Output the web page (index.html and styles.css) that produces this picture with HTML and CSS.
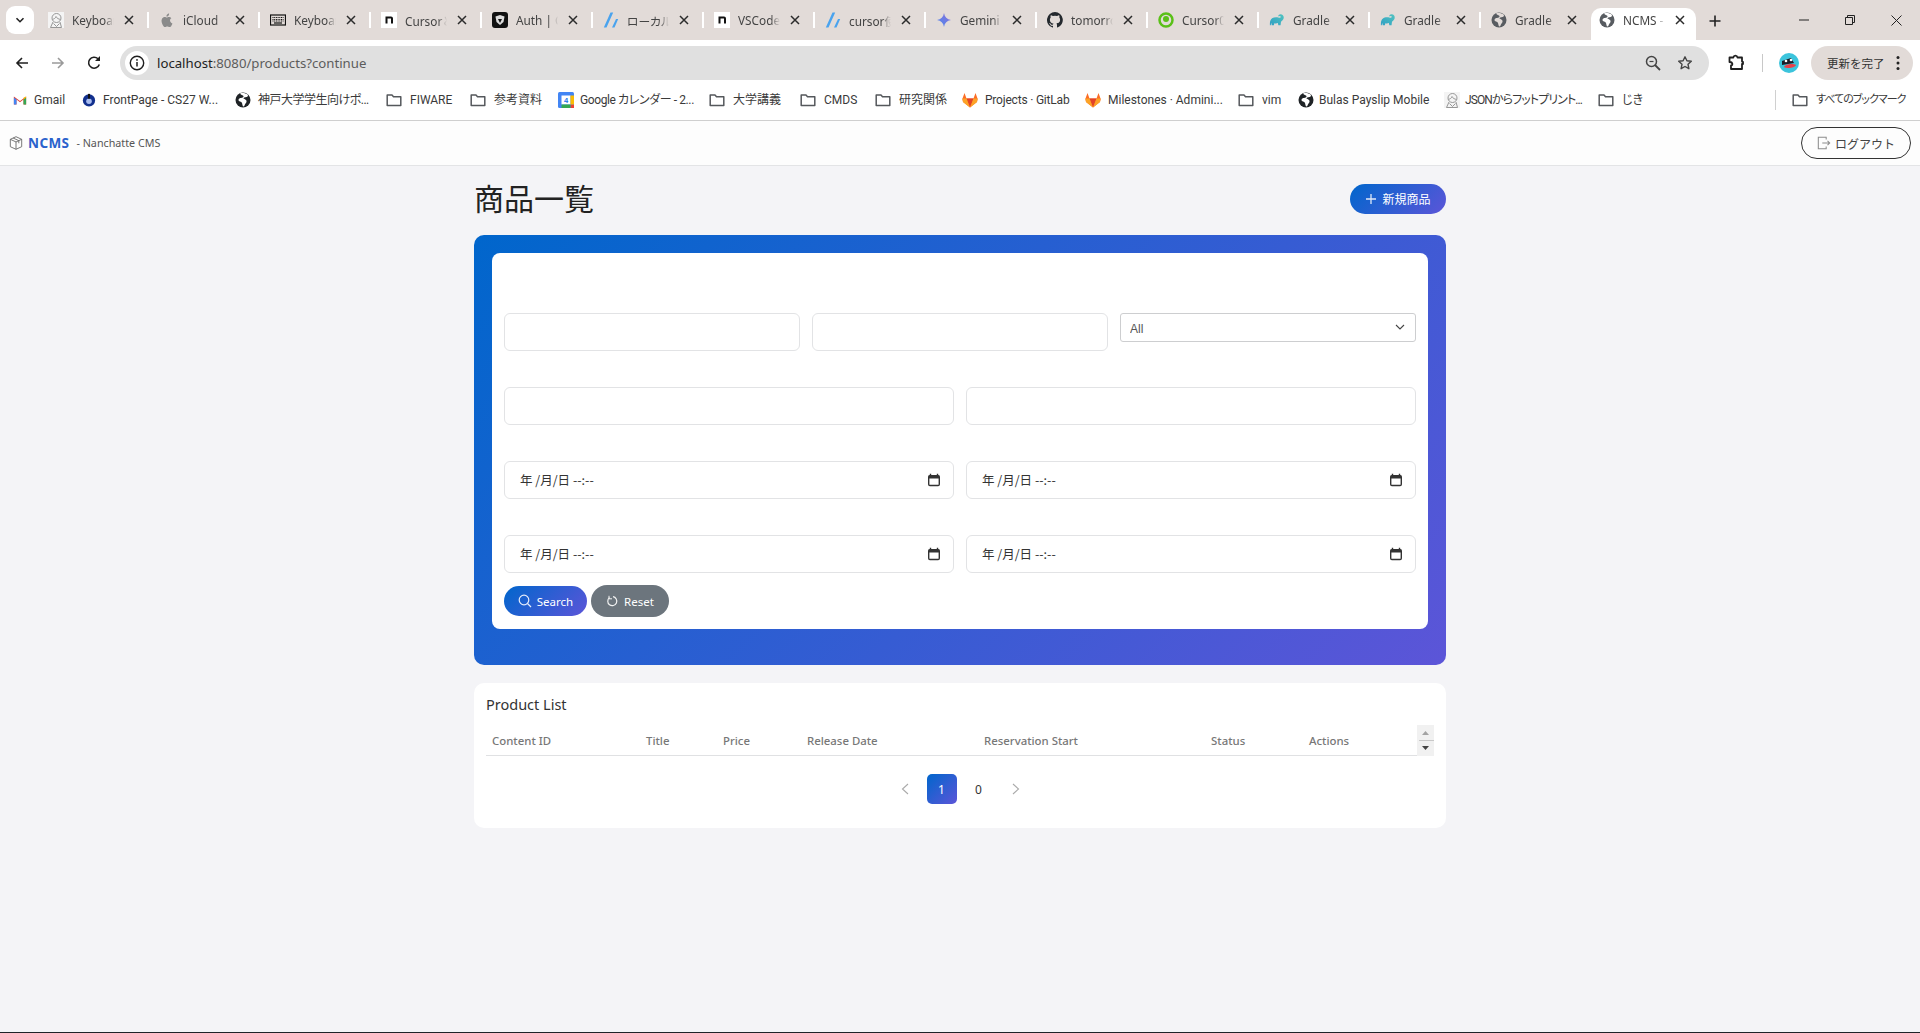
FILE: index.html
```html
<!DOCTYPE html>
<html lang="ja">
<head>
<meta charset="utf-8">
<title>NCMS - Nanchatte CMS</title>
<link rel="stylesheet" href="styles.css">
</head>
<body>
<svg class="defs" width="0" height="0" aria-hidden="true">
  <defs>
    <linearGradient id="gem" x1="0" y1="1" x2="1" y2="0"><stop offset="0" stop-color="#4b8af0"/><stop offset="1" stop-color="#8a6fd8"/></linearGradient>
    <linearGradient id="grad" x1="0" y1="1" x2="1" y2="0"><stop offset="0" stop-color="#2f9fc4"/><stop offset="1" stop-color="#52c4c0"/></linearGradient>
  </defs>
  <symbol id="i-x" viewBox="0 0 10 10"><path d="M1 1l8 8M9 1l-8 8" stroke="#2b2b2b" stroke-width="1.500" fill="none"/></symbol>
  <symbol id="i-globe" viewBox="0 0 16 16"><circle cx="8" cy="8" r="7.500" fill="#585c61"/><path d="M5 1.500C6 3 8 3 8.500 4S7 6 6 6 3.500 6.500 3.500 8s3 1.500 3.500 3 .5 3.500 1.500 3.500 1-2 2-3 1.500-2.500.5-3.500-2-1-2.500-1.500S10 5 11.500 5 13 3 13 3c-2-2-6-2.500-8-1.500z" fill="#e2dbd8"/></symbol>
  <symbol id="i-globe-w" viewBox="0 0 16 16"><circle cx="8" cy="8" r="7.500" fill="#585c61"/><path d="M5 1.500C6 3 8 3 8.500 4S7 6 6 6 3.500 6.500 3.500 8s3 1.500 3.500 3 .5 3.500 1.500 3.500 1-2 2-3 1.500-2.500.5-3.500-2-1-2.500-1.500S10 5 11.500 5 13 3 13 3c-2-2-6-2.500-8-1.500z" fill="#fff"/></symbol>
  <symbol id="i-globe-b" viewBox="0 0 16 16"><circle cx="8" cy="8" r="7.500" fill="#1f2326"/><path d="M5 1.500C6 3 8 3 8.500 4S7 6 6 6 3.500 6.500 3.500 8s3 1.500 3.500 3 .5 3.500 1.500 3.500 1-2 2-3 1.500-2.500.5-3.500-2-1-2.500-1.500S10 5 11.500 5 13 3 13 3c-2-2-6-2.500-8-1.500z" fill="#fff"/></symbol>
  <symbol id="i-folder" viewBox="0 0 16 16"><path d="M1.200 3h4.800l1.500 1.700h7.300v8.800H1.200z" fill="none" stroke="#55585c" stroke-width="1.500" stroke-linejoin="round"/></symbol>
  <symbol id="i-notion" viewBox="0 0 16 16"><rect width="16" height="16" fill="#fff"/><path d="M4.500 4.500h5.500a2 2 0 0 1 2 2v5h-2V6.500H6.500v5h-2z" fill="#111"/></symbol>
  <symbol id="i-slash" viewBox="0 0 16 16"><path d="M7.500.5h2.700L3.500 15.500H.8zM13 7h2.200l-3.700 8.500H9z" fill="#4aa3ee"/></symbol>
  <symbol id="i-gradle" viewBox="0 0 18 16"><path d="M1 12C1 7 4 5 8 5c2 0 3 .5 4 .5 1.500 0 1.500-1.500.5-2-1-.3-1 1-1.700.5-.8-.8.2-2.500 2.200-2.500 2.500 0 4 2 3.500 4.500-.5 2.500-2.500 3-3 4l-.5 4h-2.500l-.5-2.500c-1.500.5-2.500.5-4 .2L5.500 14H3l-.2-2.500c-.5.5-.8 1.300-.8 2.500H1z" fill="url(#grad)"/></symbol>
  <symbol id="i-sketch" viewBox="0 0 16 16"><rect width="16" height="16" fill="#f4f4f4"/><g fill="none" stroke="#8c8c8c" stroke-width=".9"><circle cx="8.500" cy="6" r="4.500"/><path d="M4.500 7.500c1-.5 3-1 3.500-3 1 2 2.500 2.500 4.500 3M5 10l-2.500 5.500M12 10l1.500 5.500M5.500 11.500l3 3 3-3M2.500 15.500h11"/></g></symbol>
  <symbol id="i-gitlab" viewBox="0 0 16 16"><path d="M8 15.500L1 10l-.7-3L2.500 1l2 5.500h7l2-5.500L15.700 7l-.7 3z" fill="#fc6d26"/><path d="M8 15.500l-3.500-9h7z" fill="#e24329"/><path d="M1 10l7 5.500-3.500-9H.5z" fill="#fca326"/><path d="M15 10l-7 5.500 3.500-9h4z" fill="#fca326"/></symbol>
  <symbol id="i-calendar" viewBox="0 0 14 14"><path d="M3.500.8v2.400M10.500.8v2.400" stroke="#333" stroke-width="1.400" fill="none"/><rect x="1.700" y="2.700" width="10.600" height="9.800" rx="1.200" fill="none" stroke="#333" stroke-width="1.400"/><rect x="1.700" y="2.700" width="10.600" height="2.800" fill="#333"/></symbol>
</svg>

<div class="browser-tabs">
  <div class="tab-search"><svg width="10" height="10" viewBox="0 0 10 10"><path d="M1.500 3.200L5 6.700l3.500-3.500" fill="none" stroke="#222" stroke-width="1.600"/></svg></div>
  <div class="tab"><svg class="fav"><use href="#i-sketch"/></svg><span class="tab-title">Keyboard</span><svg class="tab-x"><use href="#i-x"/></svg></div>
  <div class="tab"><svg class="fav" viewBox="0 0 16 16"><path d="M11 8.500c0-1.500 1.200-2.200 1.300-2.300-.7-1-1.800-1.200-2.200-1.200-1-.1-1.800.6-2.300.6s-1.200-.6-2-.6C4.700 5 3.700 5.600 3.100 6.600c-1.200 2-.3 5.100.9 6.800.6.800 1.200 1.700 2.100 1.700.8 0 1.200-.5 2.200-.5s1.300.5 2.200.5c.9 0 1.500-.8 2-1.700.6-1 .9-1.900.9-2-.1 0-2.400-.9-2.400-2.900zM9.400 3.700c.5-.6.800-1.400.7-2.200-.7 0-1.500.5-2 1-.4.500-.8 1.300-.7 2.100.8.100 1.500-.4 2-.9z" fill="#8a8a8a"/></svg><span class="tab-title">iCloud</span><svg class="tab-x"><use href="#i-x"/></svg></div>
  <div class="tab"><svg class="fav" viewBox="0 0 16 16"><rect x=".5" y="3" width="15" height="10" fill="none" stroke="#111" stroke-width="1.200"/><path d="M2.500 5.500h11M2.500 7.500h11M2.500 9h11" stroke="#111" stroke-dasharray="1 .7"/><path d="M4 11h8" stroke="#111" stroke-width="1.200"/></svg><span class="tab-title">Keyboard</span><svg class="tab-x"><use href="#i-x"/></svg></div>
  <div class="tab"><svg class="fav"><use href="#i-notion"/></svg><span class="tab-title">Cursorと</span><svg class="tab-x"><use href="#i-x"/></svg></div>
  <div class="tab"><svg class="fav" viewBox="0 0 16 16"><rect width="16" height="16" rx="3" fill="#111"/><path d="M3.500 4.500L8 3l4.500 1.500-1 5.500L8 13 4.500 10z" fill="#ddd"/><path d="M6 7h4l-2 4z" fill="#111"/></svg><span class="tab-title">Auth | Cu</span><svg class="tab-x"><use href="#i-x"/></svg></div>
  <div class="tab"><svg class="fav"><use href="#i-slash"/></svg><span class="tab-title">ローカルで</span><svg class="tab-x"><use href="#i-x"/></svg></div>
  <div class="tab"><svg class="fav"><use href="#i-notion"/></svg><span class="tab-title">VSCode</span><svg class="tab-x"><use href="#i-x"/></svg></div>
  <div class="tab"><svg class="fav"><use href="#i-slash"/></svg><span class="tab-title">cursor使</span><svg class="tab-x"><use href="#i-x"/></svg></div>
  <div class="tab"><svg class="fav" viewBox="0 0 16 16"><path d="M8 1c.6 4 3 6.400 7 7-4 .6-6.400 3-7 7-.6-4-3-6.400-7-7 4-.6 6.400-3 7-7z" fill="url(#gem)"/></svg><span class="tab-title">Gemini</span><svg class="tab-x"><use href="#i-x"/></svg></div>
  <div class="tab"><svg class="fav" viewBox="0 0 16 16"><path d="M8 0a8 8 0 0 0-2.500 15.600c.4.100.5-.2.500-.4v-1.400c-2.200.5-2.700-1-2.700-1-.4-.9-.9-1.200-.9-1.200-.7-.5.100-.5.100-.5.800.1 1.200.8 1.200.8.700 1.200 1.900.9 2.300.7.100-.5.300-.9.500-1.100-1.800-.2-3.600-.9-3.600-4 0-.9.300-1.600.8-2.100-.1-.2-.4-1 .1-2.100 0 0 .7-.2 2.200.8a7.500 7.500 0 0 1 4 0c1.500-1 2.200-.8 2.200-.8.400 1.100.2 1.900.1 2.100.5.600.8 1.300.8 2.100 0 3.100-1.900 3.700-3.700 3.900.3.300.6.800.6 1.500v2.200c0 .2.100.5.600.4A8 8 0 0 0 8 0z" fill="#24292e"/></svg><span class="tab-title">tomorrow</span><svg class="tab-x"><use href="#i-x"/></svg></div>
  <div class="tab"><svg class="fav" viewBox="0 0 16 16"><circle cx="8" cy="8" r="6.500" fill="none" stroke="#5ac018" stroke-width="2.500"/><circle cx="8" cy="7" r="3" fill="#5ac018"/></svg><span class="tab-title">Cursor0</span><svg class="tab-x"><use href="#i-x"/></svg></div>
  <div class="tab"><svg class="fav fav-wide"><use href="#i-gradle"/></svg><span class="tab-title">Gradle |</span><svg class="tab-x"><use href="#i-x"/></svg></div>
  <div class="tab"><svg class="fav fav-wide"><use href="#i-gradle"/></svg><span class="tab-title">Gradle |</span><svg class="tab-x"><use href="#i-x"/></svg></div>
  <div class="tab"><svg class="fav"><use href="#i-globe"/></svg><span class="tab-title">Gradle |</span><svg class="tab-x"><use href="#i-x"/></svg></div>
  <div class="tab tab-active"><svg class="fav"><use href="#i-globe-w"/></svg><span class="tab-title">NCMS -</span><svg class="tab-x"><use href="#i-x"/></svg></div>
  <svg class="new-tab" width="12" height="12" viewBox="0 0 12 12"><path d="M6 .5v11M.5 6h11" stroke="#222" stroke-width="1.600"/></svg>
  <div class="window-controls">
    <svg width="10" height="10" viewBox="0 0 10 10"><path d="M0 5h10" stroke="#222"/></svg>
    <svg width="10" height="10" viewBox="0 0 10 10"><path d="M2.500 2V.5h7v7H8M.5 2.500h7v7h-7z" fill="none" stroke="#222"/></svg>
    <svg width="11" height="11" viewBox="0 0 11 11"><path d="M.5.500l10 10M10.500.500l-10 10" stroke="#222"/></svg>
  </div>
</div>

<div class="toolbar">
  <svg class="nav-icon" viewBox="0 0 16 16"><path d="M14 8H3M8 3L3 8l5 5" fill="none" stroke="#1f1f1f" stroke-width="1.600"/></svg>
  <svg class="nav-icon" viewBox="0 0 16 16"><path d="M2 8h11M8 3l5 5-5 5" fill="none" stroke="#9a9a9a" stroke-width="1.600"/></svg>
  <svg class="nav-icon" viewBox="0 0 16 16"><path d="M13.300 9.500A5.500 5.500 0 1 1 12 3.800" fill="none" stroke="#1f1f1f" stroke-width="1.600"/><path d="M14 1v5H9z" fill="#1f1f1f"/></svg>
  <div class="omnibox">
    <span class="site-info"><svg width="16" height="16" viewBox="0 0 16 16"><circle cx="8" cy="8" r="6.700" fill="none" stroke="#1f1f1f" stroke-width="1.400"/><path d="M8 7v4.500" stroke="#1f1f1f" stroke-width="1.500"/><circle cx="8" cy="4.900" r=".9" fill="#1f1f1f"/></svg></span>
    <span class="url"><span class="url-host">localhost</span>:8080/products?continue</span>
    <svg class="omni-zoom" width="16" height="16" viewBox="0 0 16 16"><circle cx="6.500" cy="6.500" r="5" fill="none" stroke="#444" stroke-width="1.500"/><path d="M10 10l5 5" stroke="#444" stroke-width="1.800"/><path d="M4.500 6.500h4" stroke="#444" stroke-width="1.200"/></svg>
    <svg class="omni-star" width="16" height="16" viewBox="0 0 16 16"><path d="M8 1.800l1.900 4 4.400.5-3.300 3 .9 4.400L8 11.500l-3.900 2.200.9-4.400-3.300-3 4.400-.5z" fill="none" stroke="#444" stroke-width="1.400" stroke-linejoin="round"/></svg>
  </div>
  <svg class="ext" width="18" height="18" viewBox="0 0 18 18"><path d="M2.500 3.500h3.800C6.800 1 10 1 10.500 3.500h4.500v4c0 .3 1 .3 1 .3V10h-1v5H4v-3.500c2 0 2-3.500-1.500-3.500z" fill="none" stroke="#1f1f1f" stroke-width="1.800" stroke-linejoin="round"/></svg>
  <span class="tb-divider"></span>
  <span class="avatar"><svg width="20" height="20" viewBox="0 0 20 20"><circle cx="10" cy="10" r="10" fill="#3cc4dc"/><path d="M3 8l9-3 3 5-12 2z" fill="#1c1c28"/><path d="M5 14c1-3 9-4 12-2-1 3-9 4-12 2z" fill="#e8404a"/><circle cx="7" cy="8" r="1.300" fill="#fff"/><circle cx="12" cy="7" r="1.300" fill="#fff"/></svg></span>
  <div class="update-pill"><span>更新を完了</span><svg width="4" height="16" viewBox="0 0 4 16"><circle cx="2" cy="2.500" r="1.500" fill="#222"/><circle cx="2" cy="8" r="1.500" fill="#222"/><circle cx="2" cy="13.500" r="1.500" fill="#222"/></svg></div>
</div>

<div class="bookmarks">
  <a class="bm bm-gmail"><svg class="bm-icon" viewBox="0 0 16 16"><path d="M1 13V4l7 5 7-5v9h-3V7.500L8 10.500 4 7.500V13z" fill="#ea4335"/><path d="M1 13h3V7.500L1 5z" fill="#4285f4"/><path d="M15 13h-3V7.500L15 5z" fill="#34a853"/><path d="M12 7.500L15 5V4l-3 1.500z" fill="#fbbc04"/></svg><span>Gmail</span></a>
  <a class="bm bm-front"><svg class="bm-icon" viewBox="0 0 16 16"><ellipse cx="8" cy="8.500" rx="7" ry="7" fill="#12308e"/><circle cx="8" cy="9.500" r="3.200" fill="#a8bcf0"/><path d="M6.800 1h2.400v5.500H6.800z" fill="#111"/></svg><span>FrontPage - CS27 W...</span></a>
  <a class="bm bm-kobe"><svg class="bm-icon"><use href="#i-globe-b"/></svg><span>神戸大学学生向けポ...</span></a>
  <a class="bm bm-fiware"><svg class="bm-icon"><use href="#i-folder"/></svg><span>FIWARE</span></a>
  <a class="bm bm-ref"><svg class="bm-icon"><use href="#i-folder"/></svg><span>参考資料</span></a>
  <a class="bm bm-gcal"><svg class="bm-icon" viewBox="0 0 16 16"><rect width="16" height="16" rx="1.500" fill="#4285f4"/><rect x="3.500" y="3.500" width="9" height="9" fill="#fff"/><path d="M12.500 12.500H16V16h-3.500z" fill="#ea4335"/><path d="M3.500 12.500h9V16h-9z" fill="#34a853"/><path d="M12.500 3.500H16v9h-3.500z" fill="#fbbc04"/><text x="8" y="11" font-size="7.500" text-anchor="middle" font-family="Liberation Sans" font-weight="700" fill="#1a73e8">4</text></svg><span>Google カレンダー - 2...</span></a>
  <a class="bm bm-univ"><svg class="bm-icon"><use href="#i-folder"/></svg><span>大学講義</span></a>
  <a class="bm bm-cmds"><svg class="bm-icon"><use href="#i-folder"/></svg><span>CMDS</span></a>
  <a class="bm bm-lab"><svg class="bm-icon"><use href="#i-folder"/></svg><span>研究関係</span></a>
  <a class="bm bm-proj"><svg class="bm-icon"><use href="#i-gitlab"/></svg><span>Projects · GitLab</span></a>
  <a class="bm bm-mile"><svg class="bm-icon"><use href="#i-gitlab"/></svg><span>Milestones · Admini...</span></a>
  <a class="bm bm-vim"><svg class="bm-icon"><use href="#i-folder"/></svg><span>vim</span></a>
  <a class="bm bm-bulas"><svg class="bm-icon"><use href="#i-globe-b"/></svg><span>Bulas Payslip Mobile</span></a>
  <a class="bm bm-json"><svg class="bm-icon"><use href="#i-sketch"/></svg><span>JSONからフットプリント...</span></a>
  <a class="bm bm-jiki"><svg class="bm-icon"><use href="#i-folder"/></svg><span>じき</span></a>
  <span class="bm-divider"></span>
  <a class="bm bm-all"><svg class="bm-icon"><use href="#i-folder"/></svg><span>すべてのブックマーク</span></a>
</div>

<header class="app-header">
  <svg class="logo-box" width="14" height="14" viewBox="0 0 16 16"><path d="M8 .8l6.500 3v8.400L8 15.200l-6.500-3V3.800zM1.500 3.800L8 6.800l6.500-3M8 6.800v8.400M4.700 2.300l6.500 3v3" fill="none" stroke="#666" stroke-width="1"/></svg>
  <span class="brand">NCMS</span>
  <span class="brand-sub">- Nanchatte CMS</span>
  <button class="logout"><svg width="14" height="14" viewBox="0 0 16 16"><path d="M10.500 4V1.500h-9v13h9V12M6 8h8.500M12 5.500L14.500 8 12 10.500" fill="none" stroke="#8c8c8c" stroke-width="1.200"/></svg>ログアウト</button>
</header>

<main class="page">
  <div class="page-head">
    <h1 class="page-title">商品一覧</h1>
    <button class="btn btn-new"><svg width="12" height="12" viewBox="0 0 12 12"><path d="M6 1v10M1 6h10" stroke="#dfe8f8" stroke-width="1.300"/></svg>新規商品</button>
  </div>

  <section class="hero">
    <form class="search-form">
      <div class="row row-3 row-first">
        <input class="field" type="text">
        <input class="field" type="text">
        <div class="select-wrap"><select class="select"><option>All</option></select><svg class="select-arrow" width="10" height="10" viewBox="0 0 10 10"><path d="M1 3l4 4 4-4" fill="none" stroke="#444" stroke-width="1.100"/></svg></div>
      </div>
      <div class="row row-2">
        <input class="field" type="text">
        <input class="field" type="text">
      </div>
      <div class="row row-2">
        <div class="field date"><span>年 /月/日 --:--</span><svg width="14" height="14"><use href="#i-calendar"/></svg></div>
        <div class="field date"><span>年 /月/日 --:--</span><svg width="14" height="14"><use href="#i-calendar"/></svg></div>
      </div>
      <div class="row row-2">
        <div class="field date"><span>年 /月/日 --:--</span><svg width="14" height="14"><use href="#i-calendar"/></svg></div>
        <div class="field date"><span>年 /月/日 --:--</span><svg width="14" height="14"><use href="#i-calendar"/></svg></div>
      </div>
      <div class="actions">
        <button type="button" class="btn btn-search"><svg width="14" height="14" viewBox="0 0 14 14"><circle cx="6" cy="6" r="4.800" fill="none" stroke="#e6edfb" stroke-width="1.200"/><path d="M9.500 9.500L13 13" stroke="#e6edfb" stroke-width="1.300"/></svg>Search</button>
        <button type="button" class="btn btn-reset"><svg width="12" height="12" viewBox="0 0 12 12"><path d="M3.500 2.600A4.500 4.500 0 1 0 7 1.700" fill="none" stroke="#f2f2f2" stroke-width="1.200"/><path d="M3 .8v3h3" fill="none" stroke="#f2f2f2" stroke-width="1"/></svg>Reset</button>
      </div>
    </form>
  </section>

  <section class="list-card">
    <h2 class="list-title">Product List</h2>
    <div class="table-wrap">
      <div class="thead">
        <span>Content ID</span><span>Title</span><span>Price</span><span>Release Date</span><span>Reservation Start</span><span>Status</span><span>Actions</span>
      </div>
      <div class="scrollbar"><svg width="17" height="31" viewBox="0 0 17 31"><path d="M5 10l3.500-4 3.500 4z" fill="#a3a3a3"/><path d="M2 15.500h15" stroke="#c8c8c8"/><path d="M5 21h7l-3.500 4z" fill="#444"/></svg></div>
    </div>
    <nav class="pager">
      <span class="pg pg-arrow"><svg width="8" height="12" viewBox="0 0 8 12"><path d="M7 1L1.500 6 7 11" fill="none" stroke="#aaa" stroke-width="1.100"/></svg></span>
      <span class="pg pg-current">1</span>
      <span class="pg">0</span>
      <span class="pg pg-arrow"><svg width="8" height="12" viewBox="0 0 8 12"><path d="M1 1l5.500 5L1 11" fill="none" stroke="#aaa" stroke-width="1.100"/></svg></span>
    </nav>
  </section>
</main>
<div class="screen-edge"></div>
</body>
</html>
```

FILE: styles.css
```css
* { box-sizing: border-box; }
html, body { margin: 0; padding: 0; }
body {
  height: 1033px;
  overflow: hidden;
  display: flex;
  flex-direction: column;
  background: #f4f4f7;
  font-family: "Noto Sans", "Noto Sans CJK JP", sans-serif;
  color: #333;
}
.defs { position: absolute; }
.screen-edge { height: 1px; background: #1f2328; flex: none; }

/* Browser tab strip */
.browser-tabs {
  display: flex;
  align-items: center;
  height: 40px;
  flex: none;
  background: #e2dbd8;
  padding-left: 37px;
  position: relative;
}
.tab-search {
  position: absolute;
  left: 6px;
  top: 6px;
  width: 28px;
  height: 28px;
  background: #fff;
  border-radius: 9px;
  display: flex;
  align-items: center;
  justify-content: center;
}
.tab {
  width: 111px;
  height: 32px;
  margin-top: 8px;
  padding: 0 0 8px 11px;
  flex: none;
  display: flex;
  align-items: center;
  position: relative;
  font-size: 11.8px;
  color: #444;
  font-feature-settings: "palt";
}
.tab::after {
  content: "";
  position: absolute;
  right: -1px;
  top: 4px;
  height: 16px;
  width: 2px;
  background: #fff;
}
.tab:has(+ .tab-active)::after, .tab-active::after { display: none; }
.tab-active {
  background: #fff;
  border-radius: 10px 10px 0 0;
  width: 105px;
  padding-left: 8px;
}
.fav { width: 16px; height: 16px; flex: none; }
.tab-title {
  margin-left: 8px;
  width: 42px;
  flex: none;
  white-space: nowrap;
  overflow: hidden;
  -webkit-mask-image: linear-gradient(90deg, #000 78%, transparent);
  mask-image: linear-gradient(90deg, #000 78%, transparent);
}
.tab-x { width: 10px; height: 10px; margin-left: 10px; flex: none; }
.new-tab { margin-left: 13px; margin-top: 1px; flex: none; }
.window-controls {
  margin-left: auto;
  width: 125px;
  padding: 0 18px 0 4px;
  display: flex;
  justify-content: space-between;
  align-items: center;
}

/* Toolbar */
.toolbar {
  height: 40px;
  flex: none;
  background: #fff;
  display: flex;
  align-items: center;
  padding: 6px 6px 0 14px;
}
.nav-icon { width: 16px; height: 16px; margin-right: 20px; flex: none; }
.nav-icon:nth-of-type(3) { margin-right: 18px; }
.omnibox {
  width: 1589px;
  height: 34px;
  border-radius: 17px;
  background: #e0e0e0;
  display: flex;
  align-items: center;
  padding: 0 16px 0 5px;
  flex: none;
}
.site-info {
  width: 24px;
  height: 24px;
  border-radius: 50%;
  background: #fff;
  display: flex;
  align-items: center;
  justify-content: center;
  flex: none;
}
.url { margin-left: 8px; font-size: 13.2px; color: #5c5c5c; }
.url-host { color: #222; }
.omni-zoom { margin-left: auto; }
.omni-star { margin-left: 16px; }
.ext { margin-left: 18px; flex: none; }
.tb-divider { width: 1px; height: 18px; background: #c8c8c8; margin-left: 17px; flex: none; }
.avatar { width: 20px; height: 20px; margin-left: 16px; flex: none; display: flex; }
.update-pill {
  margin-left: 12px;
  width: 102px;
  height: 34px;
  border-radius: 17px;
  background: #e2dbd8;
  display: flex;
  align-items: center;
  padding-left: 16px;
  font-size: 11.5px;
  color: #333;
  flex: none;
}
.update-pill svg { margin-left: 11px; }

/* Bookmarks */
.bookmarks {
  height: 41px;
  flex: none;
  background: #fff;
  border-bottom: 1px solid #cfcfcf;
  display: flex;
  align-items: center;
  font: 12px/16px Roboto, "Noto Sans CJK JP", sans-serif;
  font-feature-settings: "palt";
  color: #3a3a3a;
  padding-left: 13px;
}
.bm { display: flex; align-items: center; flex: none; white-space: nowrap; }
.bm-icon { width: 16px; height: 16px; flex: none; margin-right: 7px; }
.bm span { flex: none; }
.bm-gmail { width: 69px; }
.bm-gmail .bm-icon { width: 14px; }
.bm-front { width: 153px; }
.bm-front .bm-icon { width: 14px; }
.bm-kobe { width: 151px; letter-spacing: -.5px; }
.bm-fiware { width: 84px; }
.bm-fiware .bm-icon, .bm-ref .bm-icon, .bm-univ .bm-icon, .bm-cmds .bm-icon, .bm-lab .bm-icon, .bm-vim .bm-icon, .bm-jiki .bm-icon, .bm-all .bm-icon { margin-right: 8px; }
.bm-ref { width: 88px; }
.bm-gcal { width: 151px; letter-spacing: -.4px; }
.bm-gcal .bm-icon { margin-right: 6px; }
.bm-univ { width: 91px; }
.bm-cmds { width: 75px; }
.bm-lab { width: 87px; }
.bm-proj { width: 123px; letter-spacing: -.2px; }
.bm-mile { width: 153px; }
.bm-vim { width: 60px; }
.bm-bulas { width: 146px; }
.bm-bulas .bm-icon { margin-right: 5px; }
.bm-json { width: 154px; letter-spacing: -.9px; }
.bm-json .bm-icon { margin-right: 5px; }
.bm-jiki { width: 177px; }
.bm-all { font-size: 11px; letter-spacing: -1px; }
.bm-divider { width: 1px; height: 20px; background: #d0d0d0; margin-right: 16px; flex: none; }

/* App header */
.app-header {
  height: 45px;
  flex: none;
  background: #fdfdfd;
  border-bottom: 1px solid #e3e4e6;
  display: flex;
  align-items: center;
  padding: 0 9px;
}
.brand { margin-left: 5px; font-size: 13.5px; font-weight: 700; color: #2a62cc; letter-spacing: .4px; }
.brand-sub { margin-left: 7px; font-size: 10.75px; color: #555; }
.logout {
  margin-left: auto;
  width: 110px;
  height: 32px;
  border: 1px solid #333;
  border-radius: 16px;
  background: #fdfdfd;
  display: flex;
  align-items: center;
  justify-content: center;
  gap: 4px;
  font: 12px "Noto Sans CJK JP", sans-serif;
  color: #444;
  padding: 0;
}

/* Page */
.page { width: 972px; margin: 0 auto; padding-top: 18px; flex: 1; }
.page-head {
  display: flex;
  justify-content: space-between;
  align-items: center;
  height: 30px;
  margin-bottom: 21px;
}
.page-title {
  margin: 0 0 4px;
  font: 400 30px/30px "Noto Sans CJK JP", sans-serif;
  color: #222;
}
.btn {
  border: 0;
  border-radius: 20px;
  display: flex;
  align-items: center;
  justify-content: center;
  color: #fff;
  font: 11.5px "Noto Sans", "Noto Sans CJK JP", sans-serif;
  padding: 0;
}
.btn-new, .btn-search, .pg-current {
  background: linear-gradient(135deg, #0066cc, #5c55d8);
}
.btn-new { width: 96px; height: 30px; gap: 5px; font-size: 12px; }

.hero {
  background: linear-gradient(135deg, #0066cc, #5c55d8);
  border-radius: 10px;
  padding: 18px 18px 36px;
}
.search-form {
  background: #fff;
  border-radius: 8px;
  padding: 12px;
  height: 376px;
}
.row { display: grid; gap: 12px; margin-top: 36.5px; }
.row-first { margin-top: 48px; }
.row-2 { grid-template-columns: 1fr 1fr; }
.row-3 { grid-template-columns: 1fr 1fr 1fr; }
.field {
  height: 37.5px;
  width: 100%;
  border: 1px solid #e2e3e5;
  border-radius: 6px;
  background: #fff;
  outline: none;
}
.date {
  display: flex;
  align-items: center;
  justify-content: space-between;
  padding: 0 12px 0 15px;
  font: 12.5px "Noto Sans CJK JP", sans-serif;
  color: #333;
}
.select-wrap { position: relative; height: 29px; }
.select {
  appearance: none;
  width: 100%;
  height: 29px;
  border: 1px solid #cdced0;
  border-radius: 3px;
  background: #fff;
  padding: 3px 0 0 9px;
  font: 12px "Liberation Sans", sans-serif;
  color: #555;
}
.select-arrow { position: absolute; right: 11px; top: 9px; }
.actions { display: flex; align-items: center; gap: 4px; margin-top: 12.5px; }
.btn-search { width: 83px; height: 30px; gap: 5px; }
.btn-reset { width: 78px; height: 32px; gap: 6px; background: #6c757d; }

.list-card {
  margin-top: 18px;
  height: 145px;
  background: #fff;
  border-radius: 10px;
  padding: 11px 12px;
}
.list-title { margin: 0; font: 400 14.5px/20px "Noto Sans", sans-serif; color: #333; }
.table-wrap { display: flex; margin-top: 11px; }
.thead {
  flex: 1;
  height: 31px;
  border-bottom: 1px solid #e0e1e3;
  display: grid;
  grid-template-columns: 154px 77px 84px 177px 227px 98px 1fr;
  align-items: center;
  padding: 0 0 0 6px;
  font-size: 11.4px;
  font-weight: 500;
  color: #777;
}
.scrollbar { width: 17px; height: 31px; background: #f1f1f1; flex: none; }
.scrollbar svg { display: block; }
.pager { display: flex; justify-content: center; gap: 7px; margin-top: 18px; }
.pg {
  width: 30px;
  height: 30px;
  border-radius: 5px;
  display: flex;
  align-items: center;
  justify-content: center;
  font-size: 12px;
  color: #333;
}
.pg-current { color: #fff; }
```
